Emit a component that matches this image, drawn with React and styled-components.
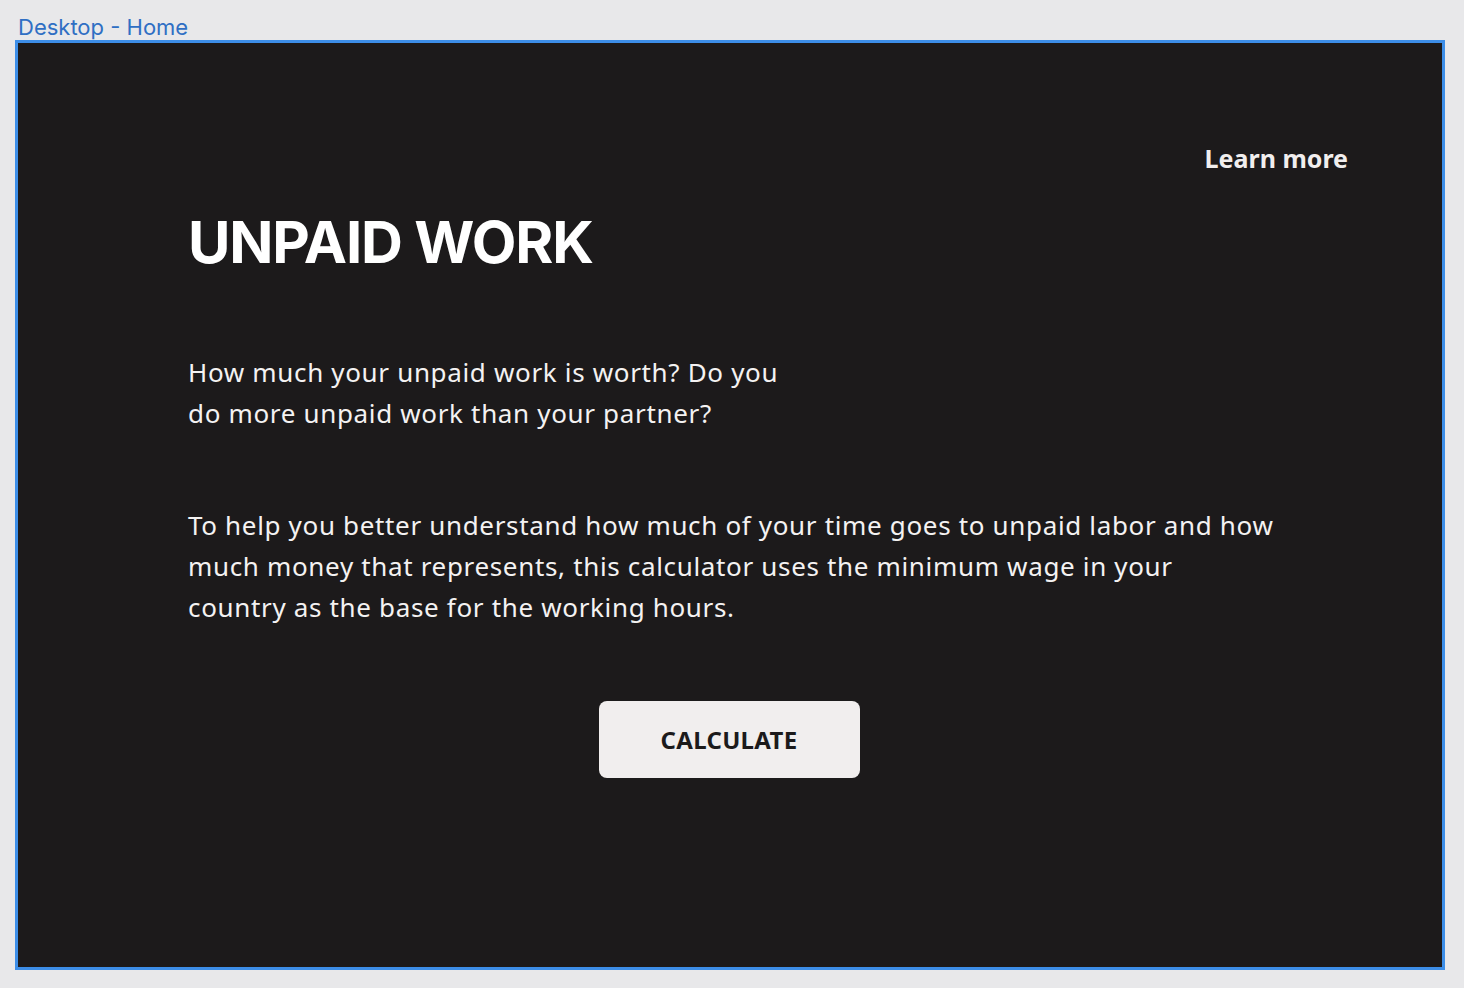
import React from "react"
import styled, { createGlobalStyle } from "styled-components"

const GlobalStyle = createGlobalStyle`
  html, body {
    margin: 0;
    padding: 0;
    background: #e8e8ea;
  }
`

const Page = styled.div`
  width: 1464px;
  height: 988px;
  box-sizing: border-box;
  padding: 12px 19px 0 15px;
  display: flex;
  flex-direction: column;
`

const FrameLabel = styled.div`
  font-family: "Inter", "Liberation Sans", sans-serif;
  font-size: 22px;
  line-height: 28px;
  color: #2f6fc4;
  padding-left: 3px;
  position: relative;
  top: 1px;
`

const Frame = styled.main`
  width: 1430px;
  height: 930px;
  box-sizing: border-box;
  border: 3px solid #3d8ee8;
  background: #1c1a1b;
  padding: 100px 94px 0 170px;
  display: flex;
  flex-direction: column;
  font-family: "Noto Sans", "Open Sans", sans-serif;
  color: #f4f2f2;
`

const TopBar = styled.nav`
  display: flex;
  justify-content: flex-end;
`

const NavLink = styled.a`
  font-size: 25px;
  font-weight: 700;
  line-height: 30px;
  color: #f1eeee;
  text-decoration: none;
  cursor: pointer;
`

const Title = styled.h1`
  margin: 34px 0 0;
  font-family: "Inter", "Noto Sans", sans-serif;
  font-size: 58px;
  font-weight: 700;
  line-height: 70px;
  letter-spacing: -1.2px;
  color: #ffffff;
`

const Lead = styled.p`
  margin: ${(p) => p.$gap}px 0 0;
  font-size: 26px;
  line-height: 41px;
  letter-spacing: 0.66px;
  font-weight: 400;
`

const Actions = styled.div`
  display: flex;
  justify-content: center;
  margin-top: 73px;
  padding-right: 78px;
`

const Button = styled.button`
  width: 261px;
  height: 77px;
  border: none;
  border-radius: 8px;
  background: #f1eeee;
  color: #1c1a1b;
  font-family: "Noto Sans", "Open Sans", sans-serif;
  font-size: 24px;
  font-weight: 700;
  letter-spacing: 0.3px;
  cursor: pointer;
`

export default function App() {
  return (
    <>
      <GlobalStyle />
      <Page>
        <FrameLabel>Desktop - Home</FrameLabel>
        <Frame>
          <TopBar>
            <NavLink>Learn more</NavLink>
          </TopBar>
          <Title>UNPAID WORK</Title>
          <Lead $gap={75}>
            How much your unpaid work is worth? Do you
            <br />
            do more unpaid work than your partner?
          </Lead>
          <Lead $gap={71}>
            To help you better understand how much of your time goes to unpaid labor and how
            <br />
            much money that represents, this calculator uses the minimum wage in your
            <br />
            country as the base for the working hours.
          </Lead>
          <Actions>
            <Button>CALCULATE</Button>
          </Actions>
        </Frame>
      </Page>
    </>
  )
}
